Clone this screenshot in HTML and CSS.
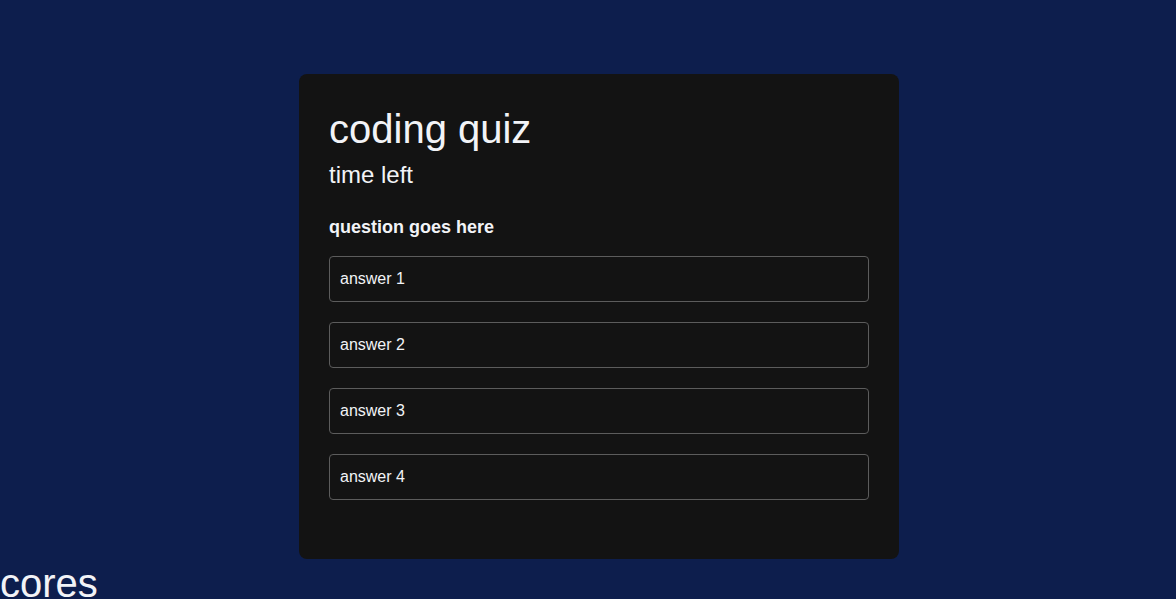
FILE: index.html
```html
<!DOCTYPE html>
<html>
<head>
<meta charset="utf-8">
<link rel="stylesheet" href="styles.css">
</head>
<body>
<main class="quiz">
  <h1 class="title">coding quiz</h1>
  <p class="timer">time left</p>
  <p class="question">question goes here</p>
  <div class="answers">
    <button class="answer">answer 1</button>
    <button class="answer">answer 2</button>
    <button class="answer">answer 3</button>
    <button class="answer">answer 4</button>
  </div>
</main>
<p class="scores">cores</p>
</body>
</html>
```
FILE: styles.css
```css
html, body {
  margin: 0;
  padding: 0;
  background: #0d1e4d;
  font-family: "Liberation Sans", Arial, sans-serif;
  color: #f2f3f7;
  overflow: hidden;
  height: 599px;
}
.quiz {
  width: 600px;
  box-sizing: border-box;
  margin: 74px 0 0 299px;
  padding: 32px 30px 59px;
  background: #131313;
  border-radius: 8px;
}
.title {
  margin: 0;
  font-size: 40px;
  font-weight: 400;
  line-height: 46px;
}
.timer {
  margin: 9px 0 0;
  font-size: 24px;
  line-height: 28px;
}
.question {
  margin: 28px 0 0;
  font-size: 18px;
  font-weight: 700;
  line-height: 20px;
}
.answers {
  display: flex;
  flex-direction: column;
  gap: 20px;
  margin-top: 19px;
}
.answer {
  display: block;
  width: 100%;
  box-sizing: border-box;
  height: 46px;
  padding: 0 10px;
  text-align: left;
  background: #131313;
  color: #f2f3f7;
  border: 1px solid #5c5c5c;
  border-radius: 4px;
  font-family: "Liberation Sans", Arial, sans-serif;
  font-size: 16px;
}
.scores {
  margin: 1px 0 0;
  font-size: 40px;
  line-height: 46px;
}
```
